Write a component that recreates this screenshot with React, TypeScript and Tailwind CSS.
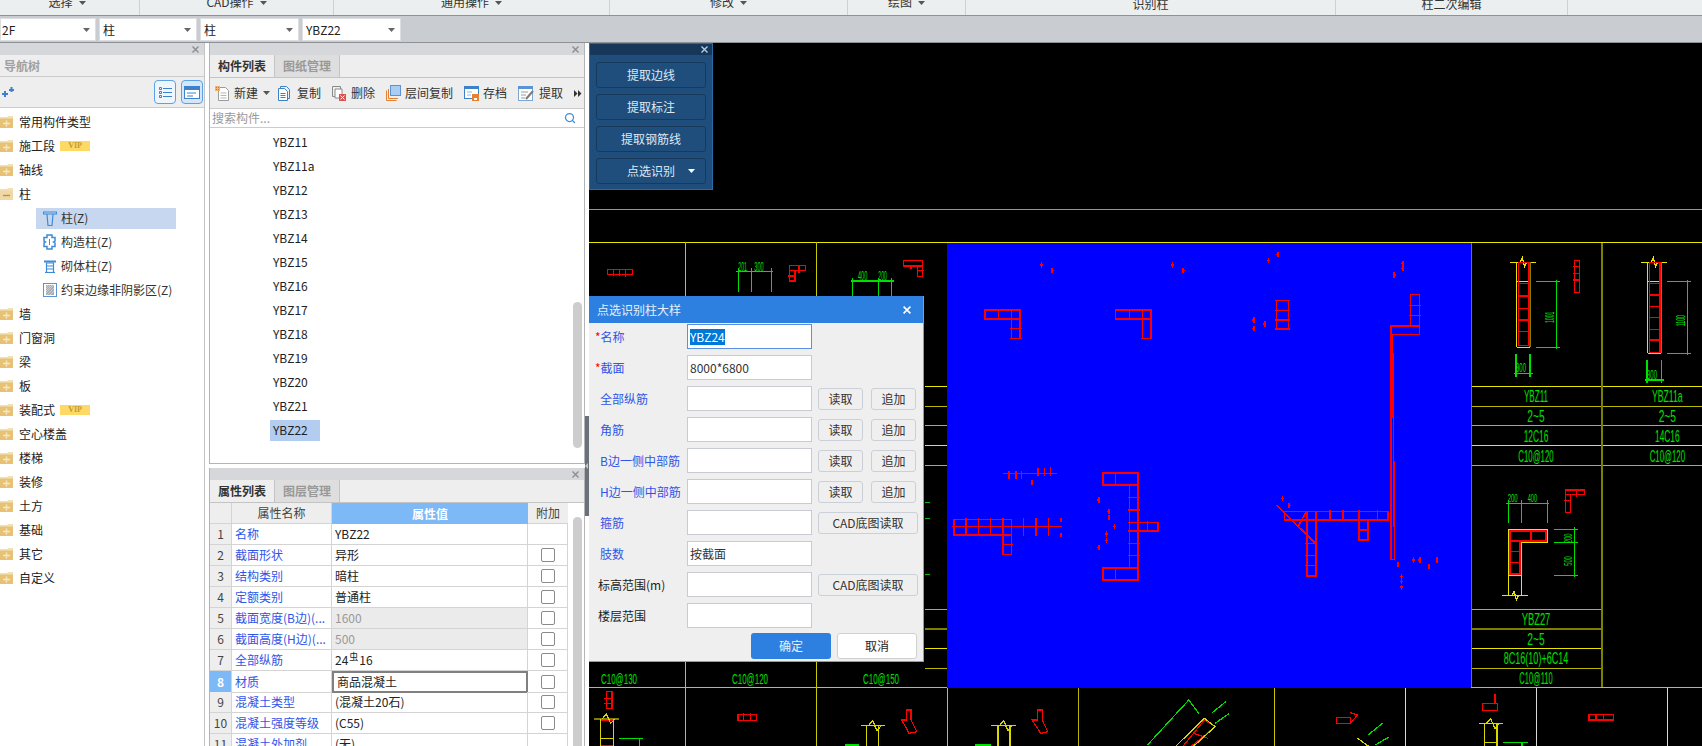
import React from "react";
import { Search } from "lucide-react";

const Caret = ({ className = "" }: { className?: string }) => (
  <svg width="7" height="4" viewBox="0 0 7 4" className={className}>
    <path d="M0 0h7L3.5 4z" fill="currentColor" />
  </svg>
);

const Close = ({ color = "#8b8d90", size = 7 }: { color?: string; size?: number }) => (
  <svg width={size} height={size} viewBox="0 0 7 7">
    <path d="M.5.5l6 6M6.5.5l-6 6" stroke={color} strokeWidth="1.4" fill="none" />
  </svg>
);

const Folder = ({ open }: { open?: boolean }) => (
  <svg width="14" height="14" viewBox="0 0 14 14" className="shrink-0">
    <path d="M0 2h7l1-1h5v3H0z" fill="#f3e0b6" />
    <path d="M0 3.500h13V13H0z" fill={open ? "#f0d8a4" : "#e8c274"} />
    {open ? (
      <path d="M3 8.500h7" stroke="#b8924a" strokeWidth="1.4" />
    ) : (
      <path d="M3 8.500h7M6.500 5.500v6" stroke="#f5e6c4" strokeWidth="1.4" />
    )}
  </svg>
);

const PillarIcon = () => (
  <svg width="14" height="15" viewBox="0 0 14 15" fill="none" stroke="#3d8bd8" strokeWidth="1.2">
    <path d="M.5 1h13v2H.5zM4 3.500l1 11h4l1-11" />
  </svg>
);
const ConstructIcon = () => (
  <svg width="13" height="16" viewBox="0 0 13 16" fill="none" stroke="#3d8bd8" strokeWidth="1.5">
    <path d="M4 1h5v2.500h3V7l-1.500 1L12 9v3.500H9V15H4v-2.500H1V9l1.500-1L1 7V3.500h3z" />
    <path d="M6.500 5v6" strokeWidth="1" />
  </svg>
);
const BrickIcon = () => (
  <svg width="12" height="13" viewBox="0 0 12 13" fill="none" stroke="#3d8bd8" strokeWidth="1.2">
    <path d="M0 1.500h12" strokeWidth="2" />
    <path d="M2.500 3h7v9.500h-7zM2.500 6h7M2.500 9h7" />
    <path d="M1 12.500h10" />
  </svg>
);
const HatchIcon = () => (
  <svg width="14" height="14" viewBox="0 0 14 14">
    <rect x=".5" y=".5" width="13" height="13" fill="#fff" stroke="#5a93d6" />
    <rect x="3" y="2" width="8" height="10" fill="#a9acb0" />
    <path d="M3 4l2-2M3 6l4-4M3 8l6-6M3 10l8-8M4 12l7-7M7 12l4-4" stroke="#dcdddf" strokeWidth=".7" />
  </svg>
);

const NewIcon = () => (
  <svg width="15" height="15" viewBox="0 0 15 15" fill="none" className="shrink-0">
    <path d="M3.500 1.500h7l3 3v10h-10z" stroke="#9a9a9a" fill="#fff" />
    <path d="M5.500 7h6M5.500 9.500h6M5.500 12h6" stroke="#b5b5b5" />
    <path d="M0 0h5v5H0z" fill="#f6b26b" />
    <path d="M1 1h1v1H1zM3 3h1v1H3zM3 1h1v1H3zM1 3h1v1H1z" fill="#e8701a" />
  </svg>
);
const CopyIcon = () => (
  <svg width="14" height="15" viewBox="0 0 14 15" fill="none" stroke="#3d82c8">
    <path d="M2.500 2.500v-2h6l3 3v9h-2" />
    <path d="M.5 2.500h6l3 3v9h-9z" fill="#fff" />
    <path d="M2.500 7.500h5M2.500 9.500h5M2.500 11.500h5" />
  </svg>
);
const DeleteIcon = () => (
  <svg width="14" height="15" viewBox="0 0 14 15" fill="none">
    <path d="M.5.5h8v10h-8z" stroke="#8a8a8a" />
    <path d="M3 3h7v9H3z" stroke="#8a8a8a" fill="#fff" />
    <path d="M7 8h7v7H7z" fill="#d9534f" />
    <path d="M8.500 9.500l4 4M12.500 9.500l-4 4" stroke="#fff" />
  </svg>
);
const LayerIcon = () => (
  <svg width="15" height="16" viewBox="0 0 15 16" fill="none">
    <path d="M.5 5.500v10h10M2.500 4v9.500H12" stroke="#e8812f" />
    <rect x="4.500" y=".5" width="10" height="10" fill="#aacdf5" stroke="#5a93d6" />
  </svg>
);
const SaveIcon = () => (
  <svg width="15" height="15" viewBox="0 0 15 15" fill="none">
    <rect x=".5" y=".5" width="14" height="12" fill="#fff" stroke="#3d82c8" />
    <path d="M0 0h15v3H0z" fill="#3d82c8" />
    <path d="M3 6h5M3 9h4" stroke="#8fb8e2" />
    <path d="M8 8h7v7H8z" fill="#e8812f" />
    <path d="M10 12h3v2h-3z" fill="#fff" />
  </svg>
);
const ExtractIcon = () => (
  <svg width="16" height="15" viewBox="0 0 16 15" fill="none">
    <rect x=".5" y=".5" width="14" height="14" fill="#fff" stroke="#7da7d3" />
    <path d="M0 0h15v3H0z" fill="#5a93d6" />
    <path d="M3 6h7M3 9h5M3 12h4" stroke="#9a9a9a" />
    <path d="M8 13l7-8" stroke="#7b7b7b" strokeWidth="2" />
  </svg>
);

const ribbon = [
  { w: "w-[140px] pr-[5px]", t: "选择", arrow: true },
  { w: "w-[194px]", t: "CAD操作", arrow: true },
  { w: "w-[276px]", t: "通用操作", arrow: true },
  { w: "w-[238px]", t: "修改", arrow: true },
  { w: "w-[118px]", t: "绘图", arrow: true },
  { w: "w-[370px]", t: "识别柱", arrow: false },
  { w: "w-[232px]", t: "柱二次编辑", arrow: false },
];

const combos = [
  { w: "w-[96px] pl-[1px]", t: "2F" },
  { w: "w-[98px] pl-[3px]", t: "柱" },
  { w: "w-[99px] pl-[3px]", t: "柱" },
  { w: "w-[99px] pl-[3px]", t: "YBZ22" },
];

const Vip = () => (
  <span className="ml-[5px] flex h-[10px] w-[30px] items-center justify-center bg-[#ffd966] font-['Liberation_Serif',serif] text-[8px] font-bold text-[#c49a2c]">
    VIP
  </span>
);

const tree: { t: string; vip?: boolean; open?: boolean; icon?: React.ReactNode; sel?: boolean }[] = [
  { t: "常用构件类型" },
  { t: "施工段", vip: true },
  { t: "轴线" },
  { t: "柱", open: true },
  { t: "柱(Z)", icon: <PillarIcon />, sel: true },
  { t: "构造柱(Z)", icon: <ConstructIcon /> },
  { t: "砌体柱(Z)", icon: <BrickIcon /> },
  { t: "约束边缘非阴影区(Z)", icon: <HatchIcon /> },
  { t: "墙" },
  { t: "门窗洞" },
  { t: "梁" },
  { t: "板" },
  { t: "装配式", vip: true },
  { t: "空心楼盖" },
  { t: "楼梯" },
  { t: "装修" },
  { t: "土方" },
  { t: "基础" },
  { t: "其它" },
  { t: "自定义" },
];

const comps = ["YBZ11", "YBZ11a", "YBZ12", "YBZ13", "YBZ14", "YBZ15", "YBZ16", "YBZ17", "YBZ18", "YBZ19", "YBZ20", "YBZ21", "YBZ22"];

const tools = [
  { t: "复制", i: <CopyIcon />, gap: "gap-[5px]" },
  { t: "删除", i: <DeleteIcon />, gap: "gap-[5px]" },
  { t: "层间复制", i: <LayerIcon />, gap: "gap-[4px]" },
  { t: "存档", i: <SaveIcon />, gap: "gap-[4px]" },
  { t: "提取", i: <ExtractIcon />, gap: "gap-[5px]" },
];

const props: { n: string; v: React.ReactNode; off?: boolean; noCheck?: boolean; active?: boolean }[] = [
  { n: "名称", v: "YBZ22", noCheck: true },
  { n: "截面形状", v: "异形" },
  { n: "结构类别", v: "暗柱" },
  { n: "定额类别", v: "普通柱" },
  { n: "截面宽度(B边)(...", v: "1600", off: true },
  { n: "截面高度(H边)(...", v: "500", off: true },
  {
    n: "全部纵筋",
    v: (
      <>
        24<span className="relative -top-[3px] mx-[1px] text-[9px]">虫</span>16
      </>
    ),
  },
  { n: "材质", v: "商品混凝土", active: true },
  { n: "混凝土类型", v: "(混凝土20石)" },
  { n: "混凝土强度等级", v: "(C55)" },
  { n: "混凝土外加剂", v: "(无)", noCheck: true },
];

const dialogRows: { l: string; star?: boolean; black?: boolean; v?: string; sel?: boolean; btn?: "two" | "cad" }[] = [
  { l: "名称", star: true, v: "YBZ24", sel: true },
  { l: "截面", star: true, v: "8000*6800" },
  { l: "全部纵筋", btn: "two" },
  { l: "角筋", btn: "two" },
  { l: "B边一侧中部筋", btn: "two" },
  { l: "H边一侧中部筋", btn: "two" },
  { l: "箍筋", btn: "cad" },
  { l: "肢数", v: "按截面" },
  { l: "标高范围(m)", black: true, btn: "cad" },
  { l: "楼层范围", black: true },
];

const box = (a: number, b: number, c: number, d: number) => `M${a} ${b}H${c}V${d}H${a}Z `;
const hl = (y: number, a: number, b: number) => `M${a} ${y}H${b} `;
const vl = (x: number, a: number, b: number) => `M${x} ${a}V${b} `;
const blobs = (pts: number[][]) => pts.map(([x, y]) => vl(x, y - 8, y + 8) + hl(y, x - 4, x + 4)).join("");

const blueRed =
  box(130, 240, 233, 267) + box(208, 267, 233, 326) + vl(170, 236, 271) + vl(208, 236, 271) + hl(296, 203, 238) + hl(326, 203, 238) +
  box(510, 240, 613, 267) + box(588, 267, 613, 326) + vl(550, 236, 271) + vl(588, 236, 271) + hl(326, 584, 617) +
  box(977, 211, 1012, 297) + hl(241, 973, 1016) + hl(270, 973, 1016) + hl(297, 973, 1016) + hl(211, 973, 1016) +
  box(1366, 193, 1392, 288) + box(1310, 288, 1392, 313) + hl(226, 1362, 1396) + hl(256, 1362, 1396) + "M1310 313V988H1320L1314 313 " +
  box(40, 869, 208, 915) + hl(890, 36, 355) + vl(75, 865, 919) + vl(112, 865, 919) + vl(147, 865, 919) + vl(183, 865, 919) +
  box(183, 915, 208, 973) + hl(943, 179, 212) + vl(243, 865, 919) + vl(278, 865, 919) + vl(315, 865, 919) + vl(351, 865, 875) + vl(351, 910, 920) +
  hl(730, 182, 340) + vl(201, 724, 746) + vl(220, 722, 748) + vl(237, 724, 746) + vl(285, 714, 738) + vl(303, 714, 738) + vl(321, 712, 738) +
  box(473, 729, 575, 765) + vl(510, 729, 765) + box(550, 765, 575, 1015) +
  hl(803, 546, 580) + hl(840, 546, 580) + hl(878, 546, 580) + hl(903, 546, 580) + hl(940, 546, 580) + hl(977, 546, 580) +
  box(575, 878, 633, 903) + vl(602, 874, 907) + box(473, 1015, 575, 1051) + vl(510, 1015, 1051) +
  "M977 825L1090 940 M1062 848L1040 890 " + box(1000, 845, 1300, 870) + box(1065, 845, 1092, 1038) +
  hl(940, 1061, 1096) + hl(977, 1061, 1096) + hl(1007, 1061, 1096) + box(1217, 870, 1243, 930) + hl(900, 1213, 1247) +
  vl(1133, 841, 874) + vl(1170, 841, 874) + vl(1217, 841, 874) + vl(1270, 841, 874) +
  blobs([[295, 105], [326, 122], [675, 105], [706, 122], [954, 92], [981, 73], [1319, 135], [1344, 100], [1344, 116], [911, 270], [911, 296], [943, 282],
    [267, 758], [461, 810], [490, 844], [491, 862], [507, 890], [484, 912], [483, 932], [461, 953], [994, 805], [1014, 826],
    [1330, 1003], [1375, 990], [1393, 990], [1443, 990], [1420, 1010], [1340, 1040], [1340, 1055], [1340, 1072]]);

const Cad = ({ x, y, w, t, size = 15, rot }: { x: number; y: number; w: number; t: string; size?: number; rot?: boolean }) => (
  <text
    x={x}
    y={y}
    textAnchor="middle"
    fontSize={size}
    textLength={w}
    lengthAdjust="spacingAndGlyphs"
    fill="#00e000"
    transform={rot ? `rotate(-90 ${x} ${y})` : undefined}
    fontFamily="'Liberation Sans', sans-serif"
  >
    {t}
  </text>
);

const CadDrawing = () => (
  <svg
    viewBox="589 43 1113 703"
    width="1113"
    height="703"
    fill="none"
    shapeRendering="crispEdges"
    className="block [&_path]:[vector-effect:non-scaling-stroke]"
  >
    {/* frame lines */}
    <path d="M589 209H1702" stroke="#a8a800" />
    <path d="M589 242H1702M1471 386H1702M1471 445H1702" stroke="#e6e600" />
    <path d="M1471 406H1702M1471 425H1702M1471 465H1702" stroke="#b8b800" />
    <path d="M925 386H947M925 445H947M925 648H947" stroke="#e6e600" />
    <path d="M925 406H947M925 425H947M925 465H947M925 609H947M925 668H947" stroke="#b8b800" />
    <path d="M925 629H947" stroke="#808000" strokeWidth="2" />
    <path d="M1471 609H1602M1471 668H1602" stroke="#b8b800" />
    <path d="M1471 648H1602" stroke="#e6e600" />
    <path d="M1471 629H1602M1602 243V688" stroke="#808000" strokeWidth="2" />
    <path d="M1471 243V688" stroke="#808000" />
    <path d="M685 242V688M816 242V688M947 688V746M1274 688V746" stroke="#c8c800" />
    <path d="M1078 688V746" stroke="#b8b800" />
    <path d="M685 688V746M816 688V746" stroke="#c8c800" />
    <path d="M1405 688V746M1536 688V746M1667 688V746" stroke="#d8d8d8" />
    <path d="M589 687H947M1471 687H1702" stroke="#c8c800" />
    <path d="M925 502H930M925 518H930M925 574H930" stroke="#00c000" />

    {/* blue selected area */}
    <rect x="947" y="243" width="524" height="445" fill="#0000ff" />
    <g transform="translate(940 230) scale(0.3444 0.3333)">
      <path d={blueRed} stroke="#ff0000" strokeWidth="1.6" />
    </g>

    {/* top row, left of the blue area */}
    <g transform="translate(585 200) scale(0.3333)">
      <path
        d={box(67, 208, 143, 224) + vl(86, 208, 228) + vl(104, 208, 228) + vl(122, 208, 230) +
          box(614, 197, 662, 212) + box(614, 212, 630, 243) + vl(642, 197, 218) + hl(228, 610, 632) +
          box(955, 182, 1012, 198) + box(997, 198, 1012, 230) + vl(978, 198, 206) + hl(212, 997, 1018)}
        stroke="#ff0000"
        strokeWidth="1.3"
      />
      <path
        d={hl(215, 452, 563) + vl(460, 205, 275) + vl(499, 205, 275) + vl(559, 205, 275) +
          hl(243, 797, 928) + vl(802, 235, 288) + vl(880, 235, 288) + vl(920, 235, 288)}
        stroke="#00e000"
        strokeWidth="1.2"
      />
      <Cad x={473} y={212} w={26} size={40} t="201" />
      <Cad x={522} y={212} w={28} size={40} t="300" />
      <Cad x={833} y={241} w={28} size={40} t="400" />
      <Cad x={893} y={241} w={26} size={40} t="200" />
    </g>

    {/* right columns */}
    <g transform="translate(1460 230) scale(0.3333)">
      <path d={hl(97, 150, 227) + "M180 97L187 84L194 110L200 97 " + hl(155, 170, 210) + vl(170, 97, 352) + hl(352, 170, 210)} stroke="#e6e600" strokeWidth="1.2" />
      <path d={vl(209, 97, 350)} stroke="#808000" strokeWidth="2" />
      <path d={box(175, 97, 207, 347) + hl(160, 175, 207) + hl(198, 175, 207) + hl(235, 175, 207) + hl(270, 175, 207) + hl(305, 175, 207) + box(343, 92, 359, 187) + hl(110, 338, 359) + hl(130, 338, 359) + hl(150, 338, 359)} stroke="#ff0000" strokeWidth="1.2" />
      <path d={hl(155, 228, 300) + hl(352, 228, 300) + vl(290, 150, 358) + vl(168, 372, 440) + vl(210, 372, 440) + hl(430, 163, 218)} stroke="#00e000" strokeWidth="1.1" />
      <Cad x={283} y={262} w={34} size={36} t="1001" rot />
      <Cad x={183} y={427} w={30} size={36} t="300" />

      <path d={hl(97, 543, 620) + "M573 97L580 84L587 110L593 97 " + hl(155, 563, 603) + vl(563, 97, 370) + hl(370, 563, 603)} stroke="#e6e600" strokeWidth="1.2" />
      <path d={vl(602, 97, 370)} stroke="#808000" strokeWidth="2" />
      <path d={box(568, 97, 600, 367) + hl(160, 568, 600) + hl(195, 568, 600) + hl(230, 568, 600) + hl(263, 568, 600) + hl(298, 568, 600) + hl(330, 568, 600)} stroke="#ff0000" strokeWidth="1.2" />
      <path d={hl(155, 621, 693) + hl(370, 621, 693) + vl(683, 150, 376) + vl(561, 390, 460) + vl(604, 390, 460) + hl(450, 556, 611)} stroke="#00e000" strokeWidth="1.1" />
      <Cad x={676} y={272} w={34} size={36} t="1100" rot />
      <Cad x={576} y={446} w={30} size={36} t="300" />

      <path d={hl(820, 138, 268) + vl(145, 810, 880) + vl(184, 810, 880) + vl(263, 810, 880) + hl(898, 282, 355) + hl(937, 282, 355) + hl(1036, 282, 355) + vl(343, 890, 1042)} stroke="#00e000" strokeWidth="1.1" />
      <Cad x={158} y={816} w={30} size={34} t="200" />
      <Cad x={217} y={816} w={28} size={34} t="400" />
      <Cad x={337} y={925} w={28} size={34} t="200" rot />
      <Cad x={337} y={993} w={28} size={34} t="500" rot />
      <path d={"M145 1095V898H263V937H184V1095 " + hl(1035, 145, 184) + hl(1097, 126, 203) + "M155 1097L162 1084L169 1110L175 1097"} stroke="#e6e600" strokeWidth="1.3" />
      <path d={box(150, 903, 258, 933) + box(150, 933, 180, 1032) + vl(213, 903, 933) + hl(965, 150, 180) + hl(997, 150, 180) + box(316, 780, 374, 793) + box(316, 793, 332, 848) + vl(349, 780, 800) + hl(812, 312, 332)} stroke="#ff0000" strokeWidth="1.2" />

      <Cad x={228} y={517} w={72} size={48} t="YBZ11" />
      <Cad x={228} y={577} w={52} size={48} t="2~5" />
      <Cad x={228} y={636} w={74} size={48} t="12C16" />
      <Cad x={228} y={695} w={106} size={48} t="C10@120" />
      <Cad x={622} y={517} w={92} size={48} t="YBZ11a" />
      <Cad x={622} y={577} w={52} size={48} t="2~5" />
      <Cad x={622} y={636} w={74} size={48} t="14C16" />
      <Cad x={622} y={695} w={106} size={48} t="C10@120" />
      <Cad x={228} y={1185} w={86} size={48} t="YBZ27" />
      <Cad x={228} y={1245} w={52} size={48} t="2~5" />
      <Cad x={228} y={1303} w={194} size={48} t="8C16(10)+6C14" />
      <Cad x={228} y={1363} w={100} size={48} t="C10@110" />
    </g>

    <Cad x={619} y={684} w={36} t="C10@130" />
    <Cad x={750} y={684} w={36} t="C10@120" />
    <Cad x={881} y={684} w={36} t="C10@150" />

    {/* bottom row, cut off by the window */}
    <g transform="translate(585 670) scale(0.712 0.3333)">
      <path d={box(30, 65, 38, 115) + hl(85, 26, 38) + hl(100, 26, 38) + box(215, 133, 241, 151) + vl(223, 130, 151) + vl(232, 130, 151) +
        "M452 120H458V150L466 185L455 190L445 150L452 150Z " + "M636 120H642V150L650 185L640 190L628 150L636 150Z " +
        box(22, 150, 40, 228) + vl(395, 170, 228) + vl(412, 170, 228) + vl(580, 170, 228) + vl(597, 170, 228) +
        "M840 228L870 150L885 170L852 228 M855 190L875 205 " +
        box(1055, 142, 1075, 160) + "M1075 160L1085 135L1075 128 " + box(1260, 100, 1282, 122) + vl(1278, 72, 100) + box(1410, 133, 1445, 150) + vl(1420, 133, 154) + vl(1430, 133, 154)}
        stroke="#ff0000" strokeWidth="1.2" />
      <path d={hl(147, 12, 48)} stroke="#808000" strokeWidth="2" />
      <path d={hl(205, 22, 40) + hl(167, 387, 422) + hl(167, 570, 605) + hl(160, 1255, 1290) + hl(218, 1263, 1281) +
        vl(22, 147, 228) + vl(40, 147, 228) + vl(395, 167, 228) + vl(412, 167, 228) + vl(580, 167, 228) + vl(597, 167, 228) +
        vl(1263, 160, 228) + vl(1281, 160, 228) + "M830 228L870 145L885 170L855 228 M1085 205L1100 228 " +
        "M24 147L30 132L36 160L42 147 M398 167L404 152L410 182L416 167 M582 167L588 152L594 182L600 167 M1266 160L1272 147L1278 175L1284 160"}
        stroke="#d8d800" strokeWidth="1.2" />
      <path d={hl(205, 48, 82) + vl(76, 205, 228) + hl(225, 365, 385) + hl(225, 548, 570) + hl(218, 1290, 1325) + vl(1316, 218, 228) +
        "M790 225L848 90L862 130 M880 130L900 95 M885 160L905 130 M1100 195L1120 160 M1110 225L1130 200"} stroke="#00e000" strokeWidth="1.2" />
    </g>
  </svg>
);

const ExtractPanel = () => (
  <div className="absolute left-0 top-0 flex h-[147px] w-[124px] flex-col border border-[#2c6aa6] bg-[#1f4e7d]">
    <div className="flex h-[11px] items-center justify-end bg-[#163759] pr-[4px]">
      <Close color="#b8cde2" />
    </div>
    <div className="flex flex-col gap-[6px] pl-[6px] pt-[7px]">
      {["提取边线", "提取标注", "提取钢筋线"].map((t) => (
        <div key={t} className="flex h-[26px] w-[110px] items-center justify-center rounded-[3px] border border-[#17395c] text-[12px] text-[#dfe8f2]">
          {t}
        </div>
      ))}
      <div className="relative flex h-[26px] w-[110px] items-center justify-center rounded-[3px] border border-[#17395c] text-[12px] text-[#dfe8f2]">
        点选识别
        <Caret className="absolute right-[10px] top-[10px] text-white" />
      </div>
    </div>
  </div>
);

const SmallBtn = ({ t, w }: { t: string; w: string }) => (
  <div className={`flex h-[22px] ${w} items-center justify-center rounded-[3px] border border-[#cbd0d8] bg-[#efefef] text-[12px] text-[#333]`}>{t}</div>
);

const Dialog = () => (
  <div className="absolute left-0 top-[253px] flex h-[366px] w-[335px] flex-col border-r border-b border-[#9a9a9a] bg-[#efefef]">
    <div className="flex h-[27px] items-center justify-between bg-[#2d7fe0] pl-[8px] pr-[12px] text-[12px] text-[#e6f0fb]">
      点选识别柱大样
      <Close color="#ffffff" size={8} />
    </div>
    <div className="mt-[1px] flex flex-col gap-[6px]">
      {dialogRows.map((r) => (
        <div key={r.l} className="flex h-[25px] items-center">
          <div className={`w-[98px] text-[12px] ${r.star ? "pl-[6px]" : r.black ? "pl-[9px]" : "pl-[11px]"} ${r.black ? "text-[#222]" : "text-[#2f55e8]"}`}>
            {r.star && <span className="text-[#f00]">*</span>}
            {r.l}
          </div>
          <div className={`flex h-[25px] w-[125px] items-center border bg-white pl-[2px] text-[12px] text-[#333] ${r.sel ? "border-[#5b8fe0]" : "border-[#c8ccd2]"}`}>
            {r.sel ? <span className="bg-[#0078d7] leading-[16px] text-white">{r.v}</span> : r.v}
          </div>
          {r.btn === "two" && (
            <div className="ml-[6px] flex gap-[8px]">
              <SmallBtn t="读取" w="w-[45px]" />
              <SmallBtn t="追加" w="w-[45px]" />
            </div>
          )}
          {r.btn === "cad" && (
            <div className="ml-[6px]">
              <SmallBtn t="CAD底图读取" w="w-[100px]" />
            </div>
          )}
        </div>
      ))}
    </div>
    <div className="mt-[5px] flex justify-end gap-[6px] pr-[6px]">
      <div className="flex h-[26px] w-[80px] items-center justify-center rounded-[3px] bg-[#2d7fe0] text-[12px] text-[#e6f0fb]">确定</div>
      <div className="flex h-[26px] w-[80px] items-center justify-center rounded-[3px] border border-[#d0d0d0] bg-white text-[12px] text-[#222]">取消</div>
    </div>
  </div>
);

const PanelHeader = () => (
  <div className="flex h-[12px] shrink-0 items-center justify-end bg-[#d5d7da] pr-[5px]">
    <Close />
  </div>
);

const Tabs = ({ a, b }: { a: string; b: string }) => (
  <div className="flex h-[23px] shrink-0 border-b border-[#c4c4c4] bg-[#eeeeee] text-[12px]">
    <div className="flex w-[64px] items-center justify-center font-bold text-[#333]">{a}</div>
    <div className="flex w-[66px] items-center justify-center border-x border-[#c4c4c4] bg-[#dedede] font-bold text-[#999]">{b}</div>
  </div>
);

export default function App() {
  return (
    <div className="flex h-[746px] w-[1702px] flex-col overflow-hidden bg-white font-['Noto_Sans_CJK_SC','Liberation_Sans',sans-serif] text-[12px] text-[#222]">
      {/* ribbon, its upper part is cut off by the screenshot */}
      <div className="flex h-[16px] shrink-0 overflow-hidden border-b border-[#8e9195] bg-[#ecefef]">
        {ribbon.map((g) => (
          <div key={g.t} className={`flex ${g.w} shrink-0 justify-center gap-[6px] border-r border-[#cfd2d2] leading-[12px] text-[#333]`}>
            <span className={g.arrow ? "-mt-[4px]" : "-mt-[2px]"}>{g.t}</span>
            {g.arrow && <Caret className="mt-[1px] text-[#555]" />}
          </div>
        ))}
      </div>

      {/* floor and component selectors */}
      <div className="flex h-[27px] shrink-0 items-start gap-[3px] border-b border-[#8e9195] bg-[#c9ccd0] pt-[2px]">
        {combos.map((c, i) => (
          <div key={i} className={`relative flex h-[23px] ${c.w} items-center border border-[#dcdee0] bg-white`}>
            {c.t}
            <Caret className="absolute right-[5px] top-[9px] text-[#666]" />
          </div>
        ))}
      </div>

      <div className="flex min-h-0 flex-1">
        {/* navigation tree */}
        <div className="flex w-[205px] shrink-0 flex-col border-r border-[#c4c4c4]">
          <PanelHeader />
          <div className="flex h-[22px] shrink-0 items-center border-b border-[#cccccc] bg-[#eeeeee] pl-[4px] font-bold text-[#a0a0a0]">导航树</div>
          <div className="flex h-[31px] shrink-0 items-center justify-between border-b border-[#cccccc] bg-[#eeeeee] pl-[2px] pr-[1px]">
            <svg width="13" height="11" viewBox="0 0 13 11" fill="#3d7fd0">
              <path d="M0 6h6v2H0zM2 4h2v6H2zM7 2h5v2H7zM8.500 0h2v5h-2z" />
            </svg>
            <div className="flex gap-[5px]">
              <div className="flex h-[24px] w-[22px] items-center justify-center rounded-[4px] border border-[#5aa2e8] bg-[#eef5fc]">
                <svg width="13" height="13" viewBox="0 0 13 13" fill="none" stroke="#3d82c8">
                  <path d="M.5 1.500h2v2h-2zM.5 5.500h2v2h-2zM.5 9.500h2v2h-2zM4 2.500h9M4 6.500h9M4 10.500h9" />
                </svg>
              </div>
              <div className="flex h-[24px] w-[22px] items-center justify-center rounded-[4px] border border-[#5aa2e8] bg-[#d3e6fa]">
                <svg width="16" height="13" viewBox="0 0 16 13" fill="none">
                  <rect x=".5" y=".5" width="15" height="12" fill="#fff" stroke="#3d82c8" />
                  <path d="M0 0h16v4H0z" fill="#3d82c8" />
                  <path d="M3 7h9M3 10h6" stroke="#3d82c8" />
                </svg>
              </div>
            </div>
          </div>
          <div className="flex flex-col pt-[2px]">
            {tree.map((n) => (
              <div key={n.t} className={`flex h-[24px] items-center ${n.icon ? "pl-[36px]" : ""}`}>
                {n.icon ? (
                  <div className={`flex h-[21px] w-[140px] items-center ${n.sel ? "bg-[#c6d7ef]" : ""}`}>
                    <div className="flex w-[25px] justify-center pl-[2px]">{n.icon}</div>
                    <span className="whitespace-nowrap text-[#333]">{n.t}</span>
                  </div>
                ) : (
                  <>
                    <Folder open={n.open} />
                    <span className="ml-[5px] text-[#222]">{n.t}</span>
                    {n.vip && <Vip />}
                  </>
                )}
              </div>
            ))}
          </div>
        </div>

        <div className="w-[4px] shrink-0" />

        {/* component list + property list */}
        <div className="flex w-[376px] shrink-0 flex-col">
          <div className="flex h-[421px] shrink-0 flex-col border-x border-b border-[#b4b4b4]">
            <PanelHeader />
            <Tabs a="构件列表" b="图纸管理" />
            <div className="flex h-[31px] shrink-0 items-center gap-[11px] whitespace-nowrap border-b border-[#cccccc] bg-[#eeeeee] pl-[5px] text-[#333]">
              <div className="-mr-[3px] flex items-center gap-[4px]">
                <NewIcon />
                新建
                <Caret className="ml-[1px] text-[#555]" />
              </div>
              {tools.map((t) => (
                <div key={t.t} className={`flex items-center ${t.gap}`}>
                  {t.i}
                  {t.t}
                </div>
              ))}
              <svg width="8" height="7" viewBox="0 0 8 7" fill="#333" className="shrink-0">
                <path d="M0 0l3.500 3.500L0 7zM4 0l3.500 3.500L4 7z" />
              </svg>
            </div>
            <div className="flex h-[19px] shrink-0 items-center justify-between border-b border-[#cccccc] pl-[2px] pr-[8px] text-[#9a9a9a]">
              搜索构件...
              <Search size={12} strokeWidth={2.5} color="#3f8fd6" />
            </div>
            <div className="relative min-h-0 flex-1 pl-[60px] pt-[2px]">
              {comps.map((c) => (
                <div key={c} className="flex h-[24px] items-center">
                  <span className={`flex h-[21px] w-[50px] items-center pl-[3px] ${c === "YBZ22" ? "bg-[#b3cdf0]" : ""}`}>{c}</span>
                </div>
              ))}
              <div className="absolute right-[2px] top-[174px] h-[146px] w-[9px] rounded-full bg-[#cdcdcd]" />
            </div>
          </div>

          <div className="mt-[4px] flex min-h-0 flex-1 flex-col overflow-hidden border-x border-[#b4b4b4]">
            <PanelHeader />
            <Tabs a="属性列表" b="图层管理" />
            <div className="flex min-h-0 flex-1">
              <div className="w-[358px] shrink-0">
                <div className="grid h-[21px] grid-cols-[22px_100px_196px_40px] text-[#444]">
                  <div className="border-b border-r border-[#d4d4d4] bg-[#eeeeee]" />
                  <div className="flex items-center justify-center border-b border-r border-[#d4d4d4] bg-[#eeeeee]">属性名称</div>
                  <div className="flex items-center justify-center bg-[#7db8f7] font-bold text-white">属性值</div>
                  <div className="flex items-center justify-center border-b border-[#d4d4d4] bg-[#eeeeee]">附加</div>
                </div>
                {props.map((p, i) => (
                  <div key={p.n} className="grid h-[21px] grid-cols-[22px_100px_196px_40px]">
                    <div className={`flex items-center justify-center border-b border-r border-[#d4d4d4] ${p.active ? "bg-[#7db8f7] font-bold text-white" : "bg-[#eeeeee] text-[#444]"}`}>{i + 1}</div>
                    <div className="flex items-center overflow-hidden whitespace-nowrap border-b border-r border-[#d4d4d4] pl-[3px] text-[#2f55e8]">{p.n}</div>
                    <div className={`flex items-center pl-[3px] ${p.active ? "border-2 border-[#808080] pl-[2px]" : "border-b border-r border-[#d4d4d4]"} ${p.off ? "bg-[#ebebeb] text-[#999]" : ""}`}>{p.v}</div>
                    <div className="flex items-center justify-center border-b border-r border-[#d4d4d4]">
                      {!p.noCheck && <div className="h-[14px] w-[14px] rounded-[2px] border border-[#8a8a8a] bg-white" />}
                    </div>
                  </div>
                ))}
              </div>
              <div className="ml-[5px] mt-[14px] h-[260px] w-[9px] rounded-full bg-[#cdcdcd]" />
            </div>
          </div>
        </div>

        {/* splitter */}
        <div className="w-[4px] shrink-0 pt-[373px]">
          <div className="flex h-[100px] items-center bg-[#6b7178]">
            <svg width="3" height="6" viewBox="0 0 3 6" fill="#c4c8cc">
              <path d="M3 0L0 3l3 3z" />
            </svg>
          </div>
        </div>

        {/* CAD canvas */}
        <div className="relative min-w-0 flex-1 overflow-hidden bg-black">
          <CadDrawing />
          <ExtractPanel />
          <Dialog />
        </div>
      </div>
    </div>
  );
}
